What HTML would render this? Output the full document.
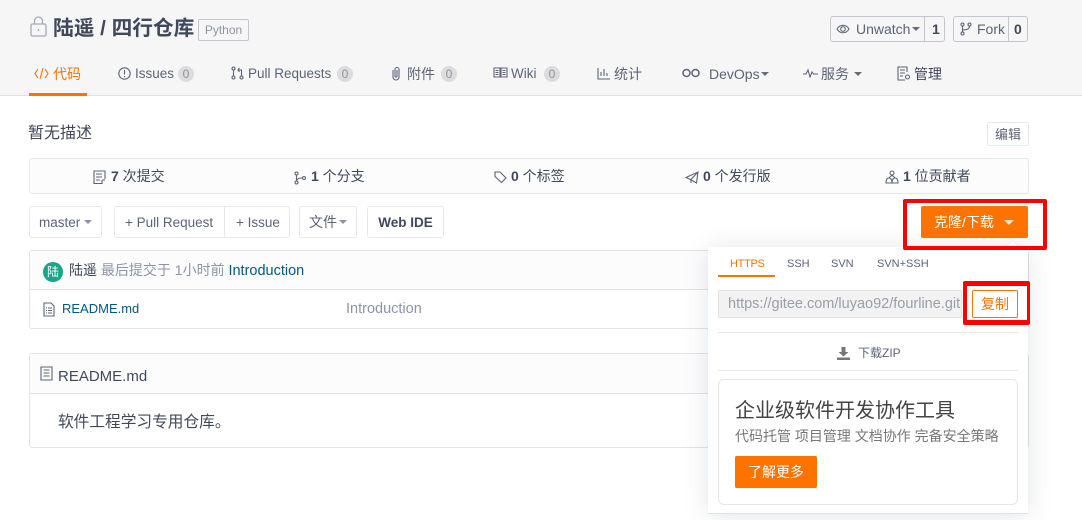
<!DOCTYPE html>
<html lang="zh"><head><meta charset="utf-8"><title>四行仓库</title>
<style>
*{box-sizing:border-box}
html,body{margin:0;padding:0;width:1082px;height:520px;overflow:hidden;background:#fff}
body{position:relative;font-family:"Liberation Sans","Noto Sans CJK SC",sans-serif;font-size:14px;color:#40485b}
.a{position:absolute;white-space:nowrap}
.t{position:absolute;white-space:nowrap;line-height:20px;height:20px}
.box{position:absolute;border:1px solid #e3e9ed;border-radius:3px;background:#fff}
.badge{position:absolute;width:16px;height:16px;border-radius:8px;background:#dcdcdc;color:#8c92a4;font-size:12px;line-height:16px;text-align:center}
.car{position:absolute;width:0;height:0;border-left:4px solid transparent;border-right:4px solid transparent;border-top:4px solid #666c7a}
svg{position:absolute;fill:none;stroke:#5d6478;stroke-width:1.1}
b{font-weight:700}
</style></head><body>
<div class="a" style="left:0;top:0;width:1082px;height:96px;background:#f6f6f6;border-bottom:1px solid #e0e0e0"></div>
<div class="a" style="left:29px;top:93px;width:58px;height:3px;background:#fe7300"></div>

<svg style="left:30px;top:16px" width="18" height="21" viewBox="0 0 18 21"><g style="stroke:#a4a9b8;stroke-width:1.3"><rect x="1" y="8" width="15" height="12" rx="1.5"/><path d="M4.5 8V5a4 4 0 0 1 8 0v3M8.500 13v2"/></g></svg>
<div class="t" style="left:53px;top:18px;font-size:20.700px;font-weight:700;line-height:22px;height:22px;color:#40485b">陆遥 / 四行仓库</div>
<div class="a" style="left:198px;top:19px;width:51px;height:22px;border:1px solid #c3c6d2;border-radius:2px;font-size:12px;line-height:20px;text-align:center;color:#8e94a6">Python</div>

<div class="box" style="left:830px;top:16px;width:115px;height:26px;background:#f6f6f6;border-color:#c3c6d2"></div>
<div class="a" style="left:924px;top:16px;width:1px;height:26px;background:#c3c6d2"></div>
<svg style="left:836px;top:23px" width="14" height="12" viewBox="0 0 14 12"><path d="M1 6c3-5 9-5 12 0-3 5-9 5-12 0z"/><circle cx="7" cy="6" r="2.3"/></svg>
<div class="t" style="left:856px;top:19px;font-size:14px;color:#5d6478">Unwatch</div>
<div class="car" style="left:912px;top:27px"></div>
<div class="t" style="left:932px;top:19px;font-weight:700">1</div>
<div class="box" style="left:953px;top:16px;width:75px;height:26px;background:#f6f6f6;border-color:#c3c6d2"></div>
<div class="a" style="left:1008px;top:16px;width:1px;height:26px;background:#c3c6d2"></div>
<svg style="left:960px;top:22px" width="12" height="14" viewBox="0 0 12 14"><circle cx="2.5" cy="2.5" r="1.5"/><circle cx="9.5" cy="2.5" r="1.5"/><circle cx="2.5" cy="11.5" r="1.5"/><path d="M2.5 4v6M2.5 8c4 0 7-1 7-4"/></svg>
<div class="t" style="left:977px;top:19px;color:#5d6478">Fork</div>
<div class="t" style="left:1014px;top:19px;font-weight:700">0</div>

<!-- tabs -->
<svg style="left:34px;top:67px" width="15" height="13" viewBox="0 0 15 13"><path style="stroke:#fe7300" d="M4 2L1 6.500 4 11M11 2l3 4.500L11 11M9 1L6 12"/></svg>
<div class="t" style="left:53px;top:64px;color:#fe7300">代码</div>
<svg style="left:118px;top:67px" width="13" height="13" viewBox="0 0 13 13"><circle cx="6.5" cy="6.5" r="5.7"/><path d="M6.5 3v4.500M6.500 9v1.200"/></svg>
<div class="t" style="left:135px;top:64px;font-size:13.500px;color:#5d6478">Issues</div>
<div class="badge" style="left:178px;top:66px">0</div>
<svg style="left:231px;top:66px" width="13" height="14" viewBox="0 0 13 14"><circle cx="2.5" cy="2.5" r="1.5"/><circle cx="2.5" cy="11.5" r="1.5"/><circle cx="10.5" cy="11.5" r="1.5"/><path d="M2.500 4v6M10.500 10V4H7M8.500 2L7 4l1.500 2"/></svg>
<div class="t" style="left:248px;top:64px;font-size:13.500px;color:#5d6478">Pull Requests</div>
<div class="badge" style="left:337px;top:66px">0</div>
<svg style="left:390px;top:66px" width="12" height="15" viewBox="0 0 12 15"><path d="M3 4v7a3 3 0 0 0 6 0V3.500a2 2 0 0 0-4 0V10a1 1 0 0 0 2 0V4"/></svg>
<div class="t" style="left:407px;top:64px;color:#5d6478">附件</div>
<div class="badge" style="left:441px;top:66px">0</div>
<svg style="left:493px;top:67px" width="15" height="12" viewBox="0 0 15 12"><path d="M1 1h6v9H1zM8 1h6v9H8zM2.500 3.500h3M2.500 5.500h3M2.500 7.500h3M9.500 3.500h3M9.500 5.500h3M9.500 7.500h3"/></svg>
<div class="t" style="left:511px;top:64px;font-size:13.500px;color:#5d6478">Wiki</div>
<div class="badge" style="left:544px;top:66px">0</div>
<svg style="left:597px;top:67px" width="14" height="13" viewBox="0 0 14 13"><path d="M1 1v11h12M4 9V5M7 9V2M10 9V6"/></svg>
<div class="t" style="left:614px;top:64px;color:#5d6478;font-size:14px">统计</div>
<svg style="left:682px;top:68px" width="18" height="10" viewBox="0 0 18 10"><g style="stroke-width:1.500"><circle cx="4.500" cy="5" r="3.500"/><circle cx="13.500" cy="5" r="3.500"/></g></svg>
<div class="t" style="left:709px;top:64px;color:#5d6478">DevOps</div>
<div class="car" style="left:761px;top:72px"></div>
<svg style="left:803px;top:68px" width="15" height="10" viewBox="0 0 15 10"><path d="M0 6h3l2-4 2 7 2-5 1.500 2H15"/></svg>
<div class="t" style="left:821px;top:64px;color:#5d6478">服务</div>
<div class="car" style="left:854px;top:72px"></div>
<svg style="left:897px;top:66px" width="14" height="15" viewBox="0 0 14 15"><path d="M10 6V1H1v13h7M3 4h5M3 7h5M3 10h3"/><circle cx="10.500" cy="11" r="2"/></svg>
<div class="t" style="left:914px;top:64px;color:#40485b">管理</div>

<!-- description -->
<div class="t" style="left:28px;top:124px;font-size:16px;color:#40485b">暂无描述</div>
<div class="box" style="left:987px;top:122px;width:42px;height:24px;font-size:13px;line-height:24px;text-align:center;color:#5d6478">编辑</div>

<!-- stats -->
<div class="box" style="left:29px;top:158px;width:1000px;height:36px;background:#fcfcfd"></div>
<svg style="left:93px;top:170px" width="13" height="15" viewBox="0 0 13 15"><path d="M9 13.500H1V1h11v8M3 4h6M3 7h6M3 10h4M9 10v4M9 10h3"/></svg>
<div class="t" style="left:111px;top:166px;font-size:14px"><b>7</b> 次提交</div>
<svg style="left:294px;top:171px" width="13" height="14" viewBox="0 0 13 14"><circle cx="2.500" cy="2.500" r="1.500"/><circle cx="2.500" cy="11.500" r="1.500"/><circle cx="10" cy="7" r="1.500"/><path d="M2.500 4v6M3 9c1-2 3-2 5.500-2"/></svg>
<div class="t" style="left:311px;top:166px;font-size:14px"><b>1</b> 个分支</div>
<svg style="left:494px;top:170px" width="13" height="14" viewBox="0 0 13 14"><path d="M1 2h5l6 6-4.500 4.500L1 6.500z"/></svg>
<div class="t" style="left:511px;top:166px;font-size:14px"><b>0</b> 个标签</div>
<svg style="left:685px;top:171px" width="14" height="13" viewBox="0 0 14 13"><path d="M1 6.500L13 1l-1.500 11-5-3zM13 1L6 8.500V12"/></svg>
<div class="t" style="left:703px;top:166px;font-size:14px"><b>0</b> 个发行版</div>
<svg style="left:885px;top:170px" width="14" height="14" viewBox="0 0 14 14"><circle cx="7" cy="3" r="2"/><path d="M1 13c0-3 1-5 3-5s3 2 3 5c0-3 1-5 3-5s3 2 3 5zM4 8l3-3 3 3"/></svg>
<div class="t" style="left:903px;top:166px;font-size:14px"><b>1</b> 位贡献者</div>

<!-- buttons -->
<div class="box" style="left:29px;top:206px;width:73px;height:32px;font-size:13.500px;line-height:31px;padding-left:9px;color:#5d6478">master</div>
<div class="car" style="left:84px;top:220px;border-top-color:#8c92a4"></div>
<div class="box" style="left:114px;top:206px;width:176px;height:32px"></div>
<div class="a" style="left:224px;top:206px;width:1px;height:32px;background:#e3e9ed"></div>
<div class="t" style="left:125px;top:212.500px;font-size:13.500px;color:#5d6478">+ Pull Request</div>
<div class="t" style="left:236px;top:212.500px;font-size:13.500px;color:#5d6478">+ Issue</div>
<div class="box" style="left:299px;top:206px;width:58px;height:32px;font-size:14px;line-height:30px;padding-left:9px;color:#5d6478">文件</div>
<div class="car" style="left:339px;top:220px;border-top-color:#8c92a4"></div>
<div class="box" style="left:367px;top:206px;width:77px;height:32px;font-size:13.500px;line-height:31px;text-align:center;font-weight:700;color:#40485b">Web IDE</div>

<!-- clone button -->
<div class="a" style="left:921px;top:206px;width:107px;height:32px;background:#fe7300;border-radius:2px;color:#fff;font-size:14px;line-height:32px;padding-left:13px">克隆/下载</div>
<div class="car" style="left:1004px;top:220px;border-top:5px solid #ffe3cc;border-left-width:5px;border-right-width:5px"></div>

<!-- files -->
<div class="box" style="left:29px;top:250px;width:1000px;height:79px;border-color:#e3e3e3;background:#fff"></div>
<div class="a" style="left:30px;top:251px;width:998px;height:39px;background:#fcfcfd;border-bottom:1px solid #e3e3e3"></div>
<div class="a" style="left:43px;top:262px;width:20px;height:20px;border-radius:50%;background:#18a689;color:#fff;font-size:12px;line-height:20px;text-align:center">陆</div>
<div class="t" style="left:69px;top:260px;font-size:14px;color:#40485b">陆遥 <span style="color:#8e94a6">最后提交于 1小时前</span> <span style="color:#005980;font-size:14.500px">Introduction</span></div>
<svg style="left:43px;top:302px" width="12" height="15" viewBox="0 0 12 15"><path d="M1 1h7l3 3v10H1zM3 6h1M5 6h4M3 8.500h1M5 8.500h4M3 11h1M5 11h4"/></svg>
<div class="t" style="left:62px;top:299px;font-size:13px;color:#005980">README.md</div>
<div class="t" style="left:346px;top:299px;font-size:14.500px;color:#8e94a6">Introduction</div>

<!-- readme -->
<div class="box" style="left:29px;top:353px;width:1000px;height:95px;border-color:#e3e3e3"></div>
<div class="a" style="left:30px;top:354px;width:998px;height:40px;background:#fcfcfd;border-bottom:1px solid #e3e3e3"></div>
<svg style="left:40px;top:366px" width="13" height="15" viewBox="0 0 13 15"><path d="M1 1h11v13H1zM3.500 4h6M3.500 7h6M3.500 10h6"/></svg>
<div class="t" style="left:58px;top:367px;font-size:15px;color:#40485b">README.md</div>
<div class="t" style="left:58px;top:413px;font-size:15.700px;color:#40485b">软件工程学习专用仓库。</div>

<!-- dropdown -->
<div class="a" style="left:708px;top:247px;width:320px;height:267px;background:#fff;box-shadow:0 2px 24px rgba(60,70,90,.14);border-bottom:1px solid #dfe1e6"></div>
<div class="a" style="left:1008px;top:243px;width:9px;height:9px;background:#fff;transform:rotate(45deg);box-shadow:-1px -1px 1px rgba(60,70,90,.06)"></div>
<div class="t" style="left:730px;top:254px;font-size:11px;letter-spacing:-.3px;color:#fe7300">HTTPS</div>
<div class="a" style="left:718px;top:275px;width:57px;height:2px;background:#fe7300"></div>
<div class="t" style="left:787px;top:254px;font-size:11px;color:#5d6478">SSH</div>
<div class="t" style="left:831px;top:254px;font-size:11px;color:#5d6478">SVN</div>
<div class="t" style="left:877px;top:254px;font-size:11px;color:#5d6478">SVN+SSH</div>
<div class="a" style="left:718px;top:290px;width:244px;height:28px;background:#f2f2f2;border:1px solid #dfe3e8;border-radius:2px;font-size:14.500px;line-height:26px;padding-left:9px;color:#9a9ea8;overflow:hidden">https://gitee.com/luyao92/fourline.git</div>
<div class="a" style="left:972px;top:290px;width:46px;height:28px;border:1px solid #fe7300;border-radius:2px;background:#fff;color:#fe7300;font-size:14px;line-height:26px;text-align:center">复制</div>
<div class="a" style="left:718px;top:332px;width:300px;height:1px;background:#e6e8ec"></div>
<svg style="left:837px;top:347px" width="13" height="13" viewBox="0 0 13 13"><path style="fill:#777;stroke:none" d="M4.500 0h4v5h3l-5 4.500L1.500 5h3zM0 10.500h13V13H0z"/></svg>
<div class="t" style="left:858px;top:343px;font-size:12px;color:#5d6478">下载ZIP</div>
<div class="a" style="left:718px;top:370px;width:300px;height:1px;background:#e6e8ec"></div>
<div class="a" style="left:718px;top:379px;width:300px;height:126px;border:1px solid #e3e5e9;border-radius:6px"></div>
<div class="a" style="left:735px;top:398px;font-size:20px;line-height:26px;color:#444">企业级软件开发协作工具</div>
<div class="a" style="left:735px;top:426px;font-size:14px;line-height:20px;color:#777">代码托管 项目管理 文档协作 完备安全策略</div>
<div class="a" style="left:735px;top:456px;width:82px;height:32px;background:#fe7300;border-radius:2px;color:#fff;font-size:14px;line-height:32px;text-align:center">了解更多</div>

<!-- red highlights -->
<div class="a" style="left:903px;top:199px;width:144px;height:51px;border:4px solid #f00;border-radius:2px"></div>
<div class="a" style="left:963px;top:281px;width:67px;height:44px;border-style:solid;border-color:#f00;border-width:5px 3px 5px 4px;border-radius:2px"></div>
</body></html>
